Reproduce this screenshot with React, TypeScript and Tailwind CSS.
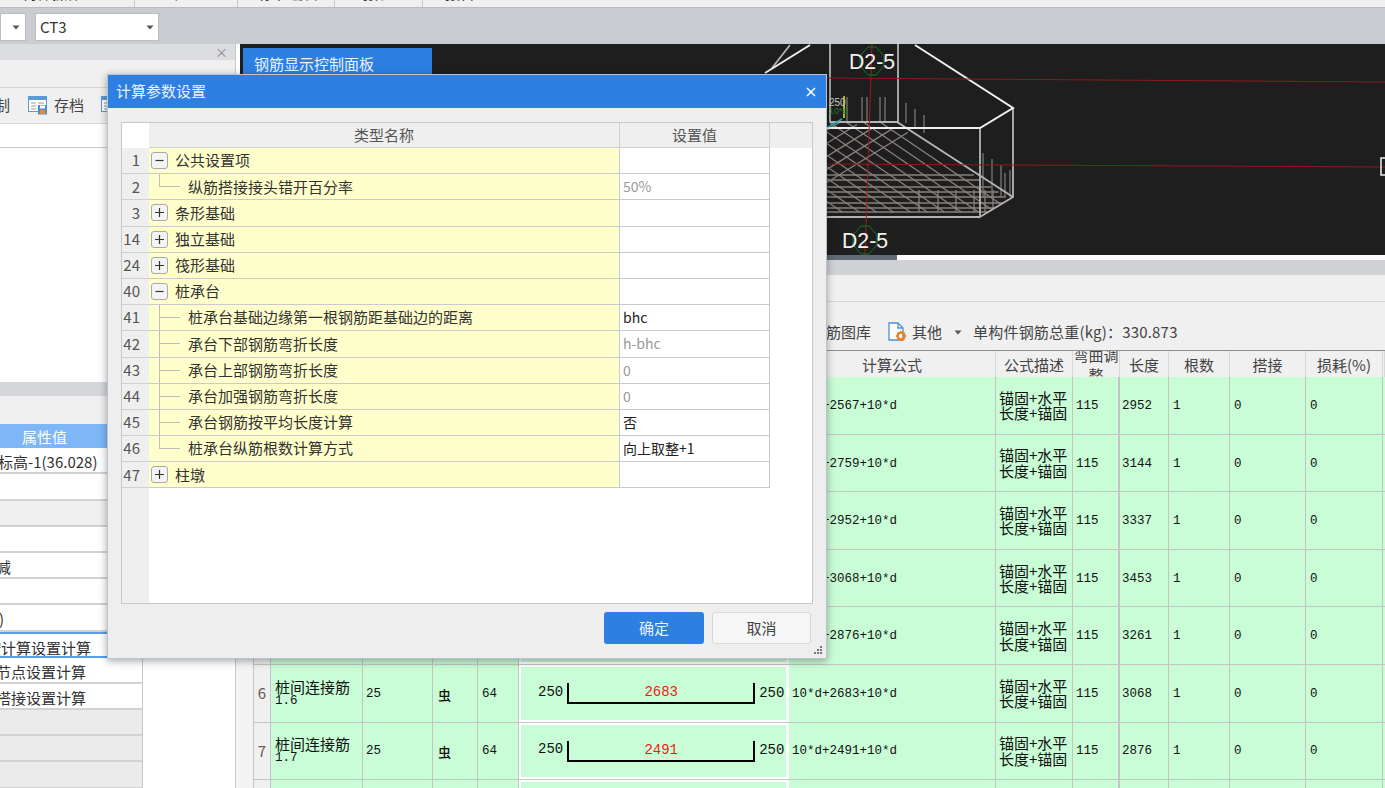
import React from "react";

const TOP_MENU = [
  { label: "构件操作", cls: "w-[135px] pl-[22px] border-r" },
  { label: "检查", cls: "w-[103px] pl-[38px] border-r" },
  { label: "标准编辑", cls: "w-[97px] pl-[20px] border-r" },
  { label: "报表", cls: "w-[88px] pl-[28px] border-r" },
  { label: "报告", cls: "w-[120px] pl-[22px]" },
];

const DIALOG_ROWS = [
  { no: 1, name: "公共设置项", toggle: "-", value: "" },
  { no: 2, name: "纵筋搭接接头错开百分率", child: "last", value: "50%", muted: true },
  { no: 3, name: "条形基础", toggle: "+", value: "" },
  { no: 14, name: "独立基础", toggle: "+", value: "" },
  { no: 24, name: "筏形基础", toggle: "+", value: "" },
  { no: 40, name: "桩承台", toggle: "-", value: "" },
  { no: 41, name: "桩承台基础边缘第一根钢筋距基础边的距离", child: "mid", value: "bhc" },
  { no: 42, name: "承台下部钢筋弯折长度", child: "mid", value: "h-bhc", muted: true },
  { no: 43, name: "承台上部钢筋弯折长度", child: "mid", value: "0", muted: true },
  { no: 44, name: "承台加强钢筋弯折长度", child: "mid", value: "0", muted: true },
  { no: 45, name: "承台钢筋按平均长度计算", child: "mid", value: "否" },
  { no: 46, name: "桩承台纵筋根数计算方式", child: "last", value: "向上取整+1" },
  { no: 47, name: "柱墩", toggle: "+", value: "" },
];

const REBAR_ROWS = [
  { no: 1, mid: 2567, len: 2952 },
  { no: 2, mid: 2759, len: 3144 },
  { no: 3, mid: 2952, len: 3337 },
  { no: 4, mid: 3068, len: 3453 },
  { no: 5, mid: 2876, len: 3261 },
  { no: 6, mid: 2683, len: 3068 },
  { no: 7, mid: 2491, len: 2876 },
  { no: 8, mid: 2299, len: 2684 },
];

// values of the property list; the panel cuts them off at its left edge
const LEFT_ROWS = [
  { text: "标高-1(36.028)", bg: "bg-white", offset: "-ml-[2px]" },
  { text: "", bg: "bg-white", offset: "" },
  { text: "", bg: "bg-[#f0f0f0]", offset: "" },
  { text: "", bg: "bg-white", offset: "" },
  { text: "减", bg: "bg-white", offset: "-ml-[4px]" },
  { text: "", bg: "bg-white", offset: "" },
  { text: ")", bg: "bg-white", offset: "-ml-[1px]" },
  { text: "按计算设置计算", bg: "bg-white", offset: "-ml-[14px]", selected: true },
  { text: "按节点设置计算", bg: "bg-white", offset: "-ml-[19px]" },
  { text: "按搭接设置计算", bg: "bg-white", offset: "-ml-[19px]" },
  { text: "", bg: "bg-[#ebebeb]", offset: "" },
  { text: "", bg: "bg-[#ebebeb]", offset: "" },
  { text: "", bg: "bg-[#ebebeb]", offset: "" },
];

const REBAR_COLS =
  "grid grid-cols-[17px_92px_70px_45px_41px_270px_207px_77px_47px_49px_61px_76px_77px_1fr]";

const HEADERS = ["", "筋号", "直径(mm)", "级别", "图号", "图形", "计算公式", "公式描述", "弯曲调整", "长度", "根数", "搭接", "损耗(%)", ""];

const MONO = "font-['Liberation_Mono',monospace] text-[12.5px]";
const CELL = "flex items-center pt-[2px] border-r border-[#c4c4c4] font-['Liberation_Mono',monospace] text-[12.5px]";

function Arrow() {
  return (
    <svg width="8" height="5" viewBox="0 0 8 5" className="shrink-0">
      <path d="M0.5 0.5h7L4 4.5z" fill="#555" />
    </svg>
  );
}

function ArchiveIcon() {
  return (
    <svg width="20" height="19" viewBox="0 0 20 19" className="shrink-0">
      <rect x="0.5" y="0.5" width="18" height="15" fill="#fff" stroke="#5a9ad8" />
      <rect x="0.5" y="0.5" width="18" height="3.5" fill="#5a9ad8" />
      <path d="M3 7h5M3 10h5M3 13h5M10 7h6" stroke="#9a9a9a" />
      <rect x="10" y="9" width="9" height="9.5" fill="#4a90d9" />
      <rect x="12" y="9.5" width="5" height="3" fill="#fff" />
      <rect x="12" y="14" width="5" height="4" fill="#f08a2c" />
    </svg>
  );
}

function OtherIcon() {
  return (
    <svg width="19" height="20" viewBox="0 0 19 20" className="shrink-0">
      <path d="M1 1h9l5 5v12H1z" fill="#fff" stroke="#4a90d9" strokeWidth="1.3" />
      <path d="M10 1v5h5" fill="none" stroke="#4a90d9" strokeWidth="1.3" />
      <circle cx="13" cy="14" r="3.4" fill="none" stroke="#ee7f1e" strokeWidth="2.4" />
      <path d="M13 8.8v1.6M13 17.6v1.6M7.8 14h1.6M16.6 14h1.6M9.4 10.4l1.1 1.1M15.5 16.5l1.1 1.1M9.4 17.6l1.1-1.1M15.5 11.5l1.1-1.1" stroke="#ee7f1e" strokeWidth="1.5" />
    </svg>
  );
}

function Hexagon({ x, y }: { x: number; y: number }) {
  return (
    <g>
      <path
        d={`M${x - 4} ${y - 14}L${x + 4} ${y - 14}L${x + 12} ${y - 5}L${x + 12} ${y + 5}L${x + 4} ${y + 14}L${x - 4} ${y + 14}L${x - 12} ${y + 5}L${x - 12} ${y - 5}Z`}
        fill="none"
        stroke="#0f7a22"
        strokeWidth="1"
      />
      <text x={x} y={y + 7.5} textAnchor="middle" fill="#f2f2f2" fontSize="22" fontFamily="'Liberation Sans', sans-serif" textLength="46" lengthAdjust="spacingAndGlyphs">
        D2-5
      </text>
    </g>
  );
}

// the pile cap wireframe in the 3D view, in page coordinates
function CapDrawing() {
  const slopeA = 0.68;
  const slopeB = 0.62;
  const meshA = [880, 863, 846, 829, 812, 795, 778, 761, 744, 727, 710];
  const meshB = [840, 857, 874, 891, 908];
  const flats = [175, 180, 187, 192, 197, 203, 208, 212];
  const ticks = [919, 938, 956, 974, 985, 993];
  const topSpikes = [
    [847, 97, 122],
    [862, 97, 122],
    [867, 97, 122],
    [880, 97, 122],
    [885, 97, 122],
    [906, 103, 123],
    [915, 109, 128],
    [924, 115, 133],
  ];
  const lowSpikes = [
    [983, 153],
    [992, 159],
    [1001, 165],
    [1005, 173],
    [1010, 170],
  ];
  // keep mesh lines inside the lower right edge of the box
  const meshEndY = (x: number) => Math.min(212, (122 + slopeA * (980 - x) + 243.5) / 2.122);
  const flatEndX = (y: number) => Math.min(897 + (y - 122) / 0.69, 980 + (217 - y) * 1.65);
  return (
    <svg width="1145" height="211" viewBox="240 44 1145 211" className="block">
      <g stroke="#8a827e" strokeWidth="1.3" fill="none">
        {meshA.map((x) => (
          <line key={x} x1={x} y1={122} x2={x + (meshEndY(x) - 122) / slopeA} y2={meshEndY(x)} />
        ))}
        {meshB.map((x) => (
          <line key={x} x1={x} y1={122 + (x - 840) * 0.15} x2={820} y2={122 + (x - 840) * 0.15 + (x - 820) * slopeB} />
        ))}
        {flats.map((y) => (
          <line key={y} x1={820} y1={y} x2={flatEndX(y)} y2={y} />
        ))}
        {ticks.map((x) => (
          <line key={x} x1={x} y1={190} x2={x} y2={Math.min(212, 217 - (x - 980) / 1.65)} />
        ))}
        {topSpikes.map(([x, y1, y2]) => (
          <line key={x} x1={x} y1={y1} x2={x} y2={y2} stroke="#777" />
        ))}
        {lowSpikes.map(([x, y1]) => (
          <line key={x} x1={x} y1={y1} x2={x} y2={197} stroke="#777" />
        ))}
      </g>
      <g stroke="#b4b4b4" strokeWidth="1.800" fill="none">
        <path d="M830 44V122M898 44V122M830 122H897L1013 197" />
        <path d="M1013 108V197L980 217V128M820 217H980M772 68L790 45" />
      </g>
      <g stroke="#f0f0f0" strokeWidth="2" fill="none">
        <path d="M765 73L810 45M915 45L1013 108L980 128H820" />
      </g>
      <path d="M820 78L1385 82M820 164L1385 167" stroke="#8f1a1a" strokeWidth="1" />
      <path d="M872 44L865 255" stroke="#a01c1c" strokeWidth="1" />
      <path d="M844 96V118" stroke="#e6dc1e" strokeWidth="1.5" />
      <path d="M828 127L842 119" stroke="#25a8b0" strokeWidth="1.5" />
      <text x="829" y="106" fill="#c8c8c8" fontSize="10" fontFamily="'Liberation Sans', sans-serif">250</text>
      <text x="829" y="114" fill="#1f7a2c" fontSize="9" fontFamily="'Liberation Sans', sans-serif">10*d</text>
      <Hexagon x={872} y={61} />
      <Hexagon x={865} y={240} />
      <rect x="1381" y="158" width="10" height="17" fill="none" stroke="#eee" strokeWidth="1.5" />
    </svg>
  );
}

function LeftPanel() {
  return (
    <div className="flex w-[236px] shrink-0 flex-col border-r border-[#c9c9c9] bg-white">
      <div className="flex h-[16px] items-center justify-end bg-[#dcdde0] pr-[7px] text-[13px] leading-none text-[#8a8a8a]">×</div>
      <div className="h-[27px] bg-[#f0f0f0]" />
      <div className="flex h-[37px] items-center gap-[6px] border-y border-[#d6d6d6] bg-[#f0f0f0] text-[15px] text-[#444]">
        <span className="-ml-[20px] w-[42px] whitespace-nowrap">控制</span>
        <ArchiveIcon />
        <span className="w-[41px] whitespace-nowrap">存档</span>
        <ArchiveIcon />
      </div>
      <div className="h-[24px] border-b border-[#c9c9c9] bg-white" />
      <div className="h-[235px] bg-white" />
      <div className="h-[14px] bg-[#d5d6da]" />
      <div className="h-[28px] bg-[#f0f0f0]" />
      <div className="flex h-[24px] w-[143px] items-center bg-[#7db7f8] pl-[22px] pt-[1px] text-[15px] text-white">属性值</div>
      <div className="w-[143px] overflow-hidden border-r border-[#c9c9c9]">
        {LEFT_ROWS.map((row, i) => (
          <div
            key={i}
            className={`h-[26.200px] overflow-hidden ${row.bg} ${row.selected ? "border-y-2 border-[#5a9ee8]" : "border-b-2 border-[#d2d2d2]"}`}
          >
            <div className={`whitespace-nowrap text-[15px] leading-[27px] text-[#333] ${row.offset}`}>{row.text}</div>
          </div>
        ))}
      </div>
    </div>
  );
}

function DrawingPane() {
  return (
    <div className="flex flex-col">
      <div className="flex h-[211px] bg-white pl-[4px]">
        <div className="relative flex-1 overflow-hidden bg-[#1e1e1e]">
          <CapDrawing />
          <div className="absolute left-[3px] top-[4px] flex h-[26px] w-[189px] items-center bg-[#2d80e2] pl-[11px] pt-[7px] text-[15px] text-[#e9f2fd]">钢筋显示控制面板</div>
        </div>
      </div>
      <div className="h-[5px] bg-white pl-[515px]">
        <div className="h-full w-[146px] bg-[#5f6b77]" />
      </div>
    </div>
  );
}

function RebarRow({ row }: { row: (typeof REBAR_ROWS)[number] }) {
  return (
    <div className={`${REBAR_COLS} h-[57.600px] border-b border-[#c4c4c4] bg-[#c9fdd6] text-[#111]`}>
      <div className="flex items-center justify-center border-r border-[#c4c4c4] bg-[#f0f0f0] text-[15px] text-[#6a5a50]">{row.no}</div>
      <div className="flex flex-col justify-center border-r border-[#c4c4c4] pl-[4px] text-[15px] leading-[15px]">
        <span>桩间连接筋</span>
        <span className={`${MONO} leading-[14px]`}>1.{row.no}</span>
      </div>
      <div className={`${CELL} pl-[3px]`}>25</div>
      <div className="flex items-center border-r border-[#c4c4c4] pl-[5px] pt-[2px] text-[13px] font-medium">虫</div>
      <div className={`${CELL} pl-[4px]`}>64</div>
      <div className="flex items-center border-2 border-r-[3px] border-white pl-[17px] font-['Liberation_Mono',monospace] text-[14px]">
        <span className="mr-[4px] -mt-[2px]">250</span>
        <div className="mt-[1px] flex h-[21px] w-[188px] items-center justify-center border-x-2 border-b-2 border-black text-[#f01818]">{row.mid}</div>
        <span className="ml-[4px]">250</span>
      </div>
      <div className={`${CELL} pl-[3px]`}>{`10*d+${row.mid}+10*d`}</div>
      <div className="flex flex-col justify-center border-r border-[#c4c4c4] pl-[3px] text-[15px] leading-[15.500px]">
        <span>锚固+水平</span>
        <span>长度+锚固</span>
      </div>
      <div className={`${CELL} border-r-2 pl-[3px]`}>115</div>
      <div className={`${CELL} pl-[2px]`}>{row.len}</div>
      <div className={`${CELL} pl-[4px]`}>1</div>
      <div className={`${CELL} pl-[4px]`}>0</div>
      <div className={`${CELL} pl-[4px]`}>0</div>
      <div />
    </div>
  );
}

function RebarPane() {
  return (
    <div className="flex min-h-0 flex-1 flex-col bg-[#f4f4f4]">
      <div className="h-[15px] bg-[#d0d2d6]" />
      <div className="h-[27px] border-b border-[#d6d6d6] bg-[#f0f0f0]" />
      <div className="flex h-[49px] items-center border-b border-[#8f8f8f] bg-[#f0f0f0] pl-[575px] pt-[12px] text-[15px] text-[#444]">
        <span>钢筋图库</span>
        <span className="ml-[17px]"><OtherIcon /></span>
        <span className="ml-[5px]">其他</span>
        <span className="ml-[12px] mr-[11px]"><Arrow /></span>
        <span className="whitespace-nowrap tracking-[0.2px]">单构件钢筋总重(kg)：330.873</span>
      </div>
      <div className="ml-[17px] min-h-0 flex-1 overflow-hidden border-l border-[#c4c4c4]">
        <div className={`${REBAR_COLS} h-[26px] bg-[#f0f0f0] text-[15px] text-[#444]`}>
          {HEADERS.map((h, i) => (
            <div key={i} className="flex items-center justify-center overflow-hidden border-r border-[#d8d8d8] pt-[1px] leading-[20px]">{h === "弯曲调整" ? <span className="w-[45px] text-center">{h}</span> : h}</div>
          ))}
        </div>
        {REBAR_ROWS.map((row) => (
          <RebarRow key={row.no} row={row} />
        ))}
      </div>
    </div>
  );
}

function TreeToggle({ sign }: { sign: string }) {
  return (
    <span className="relative z-10 flex h-[17px] w-[17px] shrink-0 items-center justify-center rounded-[3px] border border-[#a9a9a9] bg-[#f4f4f4]">
      <svg width="11" height="11" viewBox="0 0 11 11">
        <path d={sign === "+" ? "M1 5.500H10M5.500 1V10" : "M1.500 5.500H9.500"} stroke="#333" strokeWidth="1.200" fill="none" />
      </svg>
    </span>
  );
}

function DialogRow({ row }: { row: (typeof DIALOG_ROWS)[number] }) {
  return (
    <div className="grid h-[26.200px] w-[648px] shrink-0 grid-cols-[27px_470px_151px]">
      <div className="flex items-center justify-end border-b border-[#d0d0d0] bg-[#efefef] pr-[9px] text-[15px] text-[#555]">{row.no}</div>
      <div className="relative flex items-center border-b border-[#c9c9d0] bg-[#ffffcc] text-[15px] text-[#333]">
        {row.toggle ? (
          <div className="flex items-center pl-[2px]">
            <TreeToggle sign={row.toggle} />
            <span className="ml-[7px]">{row.name}</span>
          </div>
        ) : (
          <span className="pl-[39px]">{row.name}</span>
        )}
        {row.child && <span className="absolute left-[10px] top-0 h-[13px] w-[21px] border-b border-l border-[#bdbdbd]" />}
        {row.child === "mid" && <span className="absolute bottom-0 left-[10px] h-[13px] border-l border-[#bdbdbd]" />}
      </div>
      <div className={`flex items-center border-x border-b border-[#c9c9d0] bg-white pl-[3px] text-[14px] ${row.muted ? "text-[#999]" : "text-[#222]"}`}>{row.value}</div>
    </div>
  );
}

function SettingsDialog() {
  return (
    <div className="absolute left-[107px] top-[74px] flex h-[585px] w-[720px] flex-col border border-[#b9c4d2] bg-[#eeeeee] shadow-[0_2px_8px_rgba(0,0,0,0.35)]">
      <div className="flex h-[33px] shrink-0 items-center justify-between bg-[#2d80e2] pl-[8px] pr-[10px] text-[15px] text-[#e9f2fd]">
        <span>计算参数设置</span>
        <svg width="10" height="10" viewBox="0 0 10 10">
          <path d="M1 1L9 9M9 1L1 9" stroke="#fff" strokeWidth="1.500" />
        </svg>
      </div>
      <div className="mx-[13px] mt-[14px] flex h-[482px] flex-col overflow-hidden border border-[#c8c8c8] bg-white">
        <div className="grid h-[25px] shrink-0 grid-cols-[27px_470px_151px_1fr] text-[15px] text-[#555]">
          <div className="bg-white" />
          <div className="flex items-center justify-center border-b border-[#d0d0d0] bg-[#efefef]">类型名称</div>
          <div className="flex items-center justify-center border-x border-b border-[#d0d0d0] bg-[#efefef]">设置值</div>
          <div className="bg-[#efefef]" />
        </div>
        {DIALOG_ROWS.map((row) => (
          <DialogRow key={row.no} row={row} />
        ))}
        <div className="w-[27px] flex-1 bg-[#efefef]" />
      </div>
      <div className="relative mr-[15px] mt-[8px] flex justify-end gap-[8px] text-[15px]">
        <button className="h-[32px] w-[100px] rounded-[3px] bg-[#2d80e2] text-[#e9f2fd]">确定</button>
        <button className="h-[32px] w-[99px] rounded-[3px] border border-[#d5d8e0] bg-[#f6f6f6] text-[#444]">取消</button>
      </div>
      <svg width="10" height="10" viewBox="0 0 10 10" className="absolute bottom-[3px] right-[3px]">
        <path d="M7 1h2v2H7zM4 4h2v2H4zM7 4h2v2H7zM1 7h2v2H1zM4 7h2v2H4zM7 7h2v2H7z" fill="#777" />
      </svg>
    </div>
  );
}

export default function App() {
  return (
    <div className="relative flex h-[788px] w-[1385px] flex-col overflow-hidden bg-[#c9ccd1] font-['Noto_Sans_CJK_SC','Liberation_Sans',sans-serif]">
      <div className="flex h-[8px] shrink-0 overflow-hidden border-b border-[#b8bbc0] bg-[#f0f0f0]">
        {TOP_MENU.map((item) => (
          <div key={item.label} className={`h-[8px] overflow-hidden border-[#c9c9c9] ${item.cls}`}>
            <div className="-mt-[17px] text-[15px] leading-[20px] text-[#333]">{item.label}</div>
          </div>
        ))}
      </div>
      <div className="flex h-[36px] shrink-0 items-center gap-[9px] pt-[2px]">
        <div className="flex h-[28px] w-[26px] items-center justify-end border border-[#bdbdbd] bg-white pr-[5px]">
          <Arrow />
        </div>
        <div className="flex h-[28px] w-[124px] items-center justify-between border border-[#bdbdbd] bg-white pl-[4px] pr-[4px] text-[15px] text-[#333]">
          <span>CT3</span>
          <Arrow />
        </div>
      </div>
      <div className="flex min-h-0 flex-1">
        <LeftPanel />
        <div className="flex min-w-0 flex-1 flex-col">
          <DrawingPane />
          <RebarPane />
        </div>
      </div>
      <SettingsDialog />
    </div>
  );
}
